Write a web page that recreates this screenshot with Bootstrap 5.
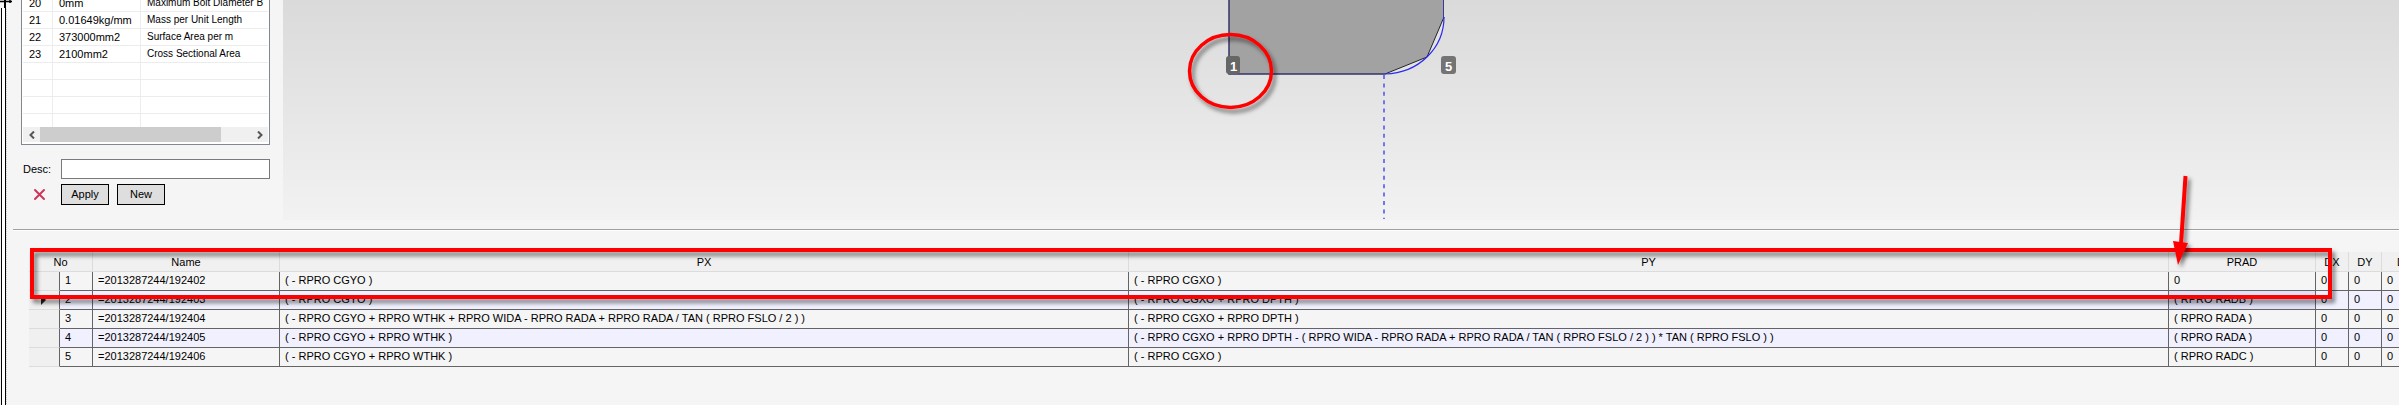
<!DOCTYPE html>
<html lang="en">
<head>
<meta charset="utf-8">
<meta name="viewport" content="width=device-width, initial-scale=1">
<title>Profile editor</title>
<link href="https://cdn.jsdelivr.net/npm/bootstrap@5.3.0/dist/css/bootstrap.min.css" rel="stylesheet">
<style>
body{background:#f5f5f5;color:#000;font-family:"Liberation Sans",Arial,sans-serif;font-size:11px;line-height:16px;min-height:100vh;overflow:hidden}
.rail{width:13px;flex:none;position:relative}
.rail-track{width:5px;margin-left:1px;border:solid #000;border-width:0 1px;background:#fff;height:100%}
.rail-mark{position:absolute;left:0;top:0}
.workspace{min-width:0}
.side{width:270px;flex:none;padding-left:8px;padding-right:13px}
.list-box{border:1px solid #828790;border-top:0;background:#fff;padding:0 1px 2px;margin-bottom:14px}
.props-clip{height:127px;overflow:hidden}
.props{width:100%;table-layout:fixed;border-collapse:separate;border-spacing:0}
.props td{height:17px;line-height:16px;padding:0 0 0 6px;border-bottom:1px solid #ececec;border-right:1px solid #ececec;white-space:nowrap}
.props td:last-child{border-right:0;font-size:10px}
.props tr:first-child td{height:11px}
.props tr:first-child span{display:block;margin-top:-5px}
.col-no{width:30px}
.col-val{width:88px}
.hbar{height:15px;background:#f0f0f0}
.hbar button{border:0;background:none;padding:0;width:17px;height:15px;display:flex;align-items:center;justify-content:center}
.thumb{width:181px;background:#cdcdcd}
.desc-label{width:40px;flex:none;padding-left:2px}
.field{border:1px solid #7a7a7a;border-radius:0;height:20px;min-height:20px;padding:0 3px;font-size:11px;background:#fff}
.push{width:48px;height:21px;border:1px solid #000;border-radius:0;background:#dedede;color:#000;padding:0;font-size:11px;line-height:19px}
.del{width:40px;height:21px;border:0;background:none;padding:0 0 0 12px;display:flex;align-items:center}
.actions{margin-top:5px}
.stage{min-width:0;height:220px;background:linear-gradient(#dadada,#f2f2f2);overflow:hidden}
.rule{border-top:1px solid #a0a0a0;border-bottom:1px solid #fff;height:2px;margin-top:9px}
.grid-wrap{margin:21px 0 0 16px;overflow:hidden;padding-bottom:38px}
.points{width:2392px;table-layout:fixed;border-collapse:separate;border-spacing:0}
.points th{font-weight:400;text-align:center;height:20px;line-height:18px;padding:0;background:#f0f0f0;border-right:1px solid #dcdcdc;border-bottom:1px solid #dcdcdc}
.points td{height:19px;line-height:16px;padding:0 0 2px 5px;border-right:1px solid #646464;border-bottom:1px solid #646464;white-space:nowrap}
.points td:first-child{background:#f0f0f0;border-bottom-color:#dcdcdc;padding:0 0 0 12px}
.points tr.alt td:not(:first-child){background:#f0f0ff}
.points tr.alt td.picked{background:#e0e0f6}
.note{position:absolute;left:0;top:0;pointer-events:none;z-index:2}
.tag{font:bold 13px "Liberation Sans",Arial,sans-serif;fill:#fff}
</style>
</head>
<body class="position-relative">
<div class="d-flex min-vh-100">
  <div class="rail">
    <div class="rail-track"></div>
    <svg class="rail-mark" width="14" height="100%" aria-hidden="true"><path d="M6.500 9V405" stroke="#c8c8c8" stroke-dasharray="1 1"/><path d="M0 0h7v8H0z" fill="#f5f5f5"/><path d="M0 1.500h12M10 0v3" stroke="#000" stroke-width="1.500" fill="none"/><path d="M5 0v8" stroke="#000" stroke-width="2"/></svg>
  </div>
  <main class="workspace flex-grow-1">
    <div class="d-flex">
      <section class="side">
        <div class="list-box">
          <div class="props-clip">
          <table class="props">
            <colgroup><col class="col-no"><col class="col-val"><col></colgroup>
            <tbody>
            <tr><td><span>20</span></td><td><span>0mm</span></td><td><span>Maximum Bolt Diameter B</span></td></tr>
            <tr><td>21</td><td>0.01649kg/mm</td><td>Mass per Unit Length</td></tr>
            <tr><td>22</td><td>373000mm2</td><td>Surface Area per m</td></tr>
            <tr><td>23</td><td>2100mm2</td><td>Cross Sectional Area</td></tr>
            <tr><td></td><td></td><td></td></tr>
            <tr><td></td><td></td><td></td></tr>
            <tr><td></td><td></td><td></td></tr>
            <tr><td></td><td></td><td></td></tr>
            </tbody>
          </table>
          </div>
          <div class="hbar d-flex">
            <button type="button" aria-label="Scroll left"><svg width="8" height="8"><path d="M6 0.500L2.500 4L6 7.500" fill="none" stroke="#555" stroke-width="2"/></svg></button>
            <div class="thumb"></div>
            <button type="button" class="ms-auto" aria-label="Scroll right"><svg width="8" height="8"><path d="M2 0.500L5.500 4L2 7.500" fill="none" stroke="#555" stroke-width="2"/></svg></button>
          </div>
        </div>
        <div class="d-flex align-items-center">
          <label for="desc" class="desc-label">Desc:</label>
          <input id="desc" type="text" class="form-control field">
        </div>
        <div class="actions d-flex">
          <button type="button" class="del" aria-label="Delete"><svg width="14" height="14"><path d="M2 2L11 11M11 2L2 11" stroke="#cf3558" stroke-width="2" stroke-linecap="round"/></svg></button>
          <div class="d-flex gap-2">
            <button type="button" class="btn push">Apply</button>
            <button type="button" class="btn push">New</button>
          </div>
        </div>
      </section>
      <section class="stage flex-grow-1">
        <svg class="d-block" width="2116" height="220" aria-label="Profile drawing">
          <path d="M946 0V74H1102L1144 57L1161 17V0Z" fill="#a2a2a2"/>
          <path d="M1102 74C1136 73 1161 48 1161 17L1144 57Z" fill="#e4e4e4"/>
          <path d="M1102 74L1144 57L1161 17" fill="none" stroke="#222"/>
          <path d="M946 0V74H1102" fill="none" stroke="#33336a" stroke-width="1.500"/>
          <path d="M1160.500 0V18" stroke="#3a3a99" fill="none"/>
          <path d="M1102 74C1136 73 1161 48 1161 17" fill="none" stroke="#2a2af0" stroke-width="1.200"/>
          <path d="M1101 75V219" stroke="#7474f0" stroke-width="2" stroke-dasharray="4 4.400"/>
          <rect x="943" y="56" width="14" height="18" rx="3" fill="#666"/><text class="tag" x="947" y="71">1</text>
          <rect x="1158" y="56" width="15" height="18" rx="3" fill="#747474"/><text class="tag" x="1162" y="71">5</text>
        </svg>
      </section>
    </div>
    <div class="rule"></div>
    <div class="grid-wrap">
      <table class="points">
        <colgroup><col style="width:31px"><col style="width:33px"><col style="width:187px"><col style="width:849px"><col style="width:1040px"><col style="width:147px"><col style="width:33px"><col style="width:33px"><col></colgroup>
        <thead><tr><th colspan="2">No</th><th>Name</th><th>PX</th><th>PY</th><th>PRAD</th><th>DX</th><th>DY</th><th>D</th></tr></thead>
        <tbody>
        <tr><td></td><td>1</td><td>=2013287244/192402</td><td>( - RPRO CGYO )</td><td>( - RPRO CGXO )</td><td>0</td><td>0</td><td>0</td><td>0</td></tr>
        <tr class="alt"><td><svg class="d-block" width="6" height="10"><path d="M0 0L5 5L0 10Z" fill="#222"/></svg></td><td>2</td><td>=2013287244/192403</td><td>( - RPRO CGYO )</td><td>( - RPRO CGXO + RPRO DPTH )</td><td class="picked">( RPRO RADB )</td><td>0</td><td>0</td><td>0</td></tr>
        <tr><td></td><td>3</td><td>=2013287244/192404</td><td>( - RPRO CGYO + RPRO WTHK + RPRO WIDA - RPRO RADA + RPRO RADA / TAN ( RPRO FSLO / 2 ) )</td><td>( - RPRO CGXO + RPRO DPTH )</td><td>( RPRO RADA )</td><td>0</td><td>0</td><td>0</td></tr>
        <tr class="alt"><td></td><td>4</td><td>=2013287244/192405</td><td>( - RPRO CGYO + RPRO WTHK )</td><td>( - RPRO CGXO + RPRO DPTH - ( RPRO WIDA - RPRO RADA + RPRO RADA / TAN ( RPRO FSLO / 2 ) ) * TAN ( RPRO FSLO ) )</td><td>( RPRO RADA )</td><td>0</td><td>0</td><td>0</td></tr>
        <tr><td></td><td>5</td><td>=2013287244/192406</td><td>( - RPRO CGYO + RPRO WTHK )</td><td>( - RPRO CGXO )</td><td>( RPRO RADC )</td><td>0</td><td>0</td><td>0</td></tr>
        </tbody>
      </table>
    </div>
  </main>
</div>
<svg class="note w-100 h-100" aria-hidden="true">
  <defs><filter id="drop" x="-10%" y="-40%" width="120%" height="200%"><feDropShadow dx="3" dy="4" stdDeviation="2" flood-color="#000" flood-opacity=".5"/></filter><filter id="dropArrow" x="-100%" y="-20%" width="300%" height="140%"><feDropShadow dx="3" dy="3" stdDeviation="2" flood-color="#000" flood-opacity=".5"/></filter></defs>
  <g fill="none" stroke="#f00">
    <ellipse cx="1230.500" cy="71" rx="41" ry="36.500" stroke-width="3.500" filter="url(#drop)"/>
    <rect x="32" y="250" width="2298" height="47" stroke-width="4" filter="url(#drop)"/>
    <g filter="url(#dropArrow)"><path d="M2185.500 176L2181 244" stroke-width="4"/><path d="M2173 241L2188 243L2178 265Z" fill="#f00" stroke="none"/></g>
  </g>
</svg>
<script src="https://cdn.jsdelivr.net/npm/bootstrap@5.3.0/dist/js/bootstrap.bundle.min.js"></script>
</body>
</html>
